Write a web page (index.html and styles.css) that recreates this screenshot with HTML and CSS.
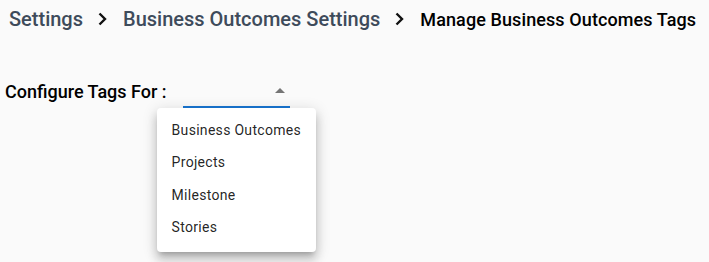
FILE: index.html
```html
<!DOCTYPE html>
<html lang="en">
<head>
    <meta charset="UTF-8">
    <meta name="viewport" content="width=device-width, initial-scale=1.0">
    <title>Manage Business Outcomes Tags</title>
    <link rel="stylesheet" href="styles.css">
</head>
<body>
    <div class="container">
        <!-- Breadcrumb -->
        <div class="breadcrumb">
            <span class="crumb">Settings</span>
            <span class="sep">
                <svg width="9" height="14" viewBox="0 0 9 14"><path d="M1.5 1.5 L7 7 L1.5 12.5" fill="none" stroke="#111" stroke-width="2.4"/></svg>
            </span>
            <span class="crumb">Business Outcomes Settings</span>
            <span class="sep">
                <svg width="9" height="14" viewBox="0 0 9 14"><path d="M1.5 1.5 L7 7 L1.5 12.5" fill="none" stroke="#111" stroke-width="2.4"/></svg>
            </span>
            <span class="crumb-current">Manage Business Outcomes Tags</span>
        </div>

        <!-- Selector de tipo -->
        <div class="config-row">
            <label class="config-label">Configure Tags For :</label>
            <div class="select">
                <span class="select-arrow"></span>
                <ul class="menu">
                    <li>Business Outcomes</li>
                    <li>Projects</li>
                    <li>Milestone</li>
                    <li>Stories</li>
                </ul>
            </div>
        </div>
    </div>
</body>
</html>
```

FILE: styles.css
```css
html, body {
    height: 100%;
}
body {
    margin: 0;
    background: #fafafa;
    font-family: Roboto, "Liberation Sans", sans-serif;
}
.container {
    min-height: 100%;
    box-sizing: border-box;
    padding: 6px 5px;
}
.breadcrumb {
    display: flex;
    align-items: center;
    height: 26px;
    padding-left: 4px;
}
.crumb {
    font-size: 20px;
    font-weight: 500;
    color: #3e4b5b;
}
.sep {
    display: flex;
    align-items: center;
    margin: 0 16px 0 15px;
}
.crumb-current {
    font-size: 18px;
    font-weight: 500;
    color: #000;
    letter-spacing: 0.1px;
}
.config-row {
    display: flex;
    align-items: flex-end;
    margin-top: 46px;
}
.config-label {
    font-size: 18px;
    font-weight: 500;
    color: #000;
    padding-bottom: 6px;
}
.select {
    position: relative;
    width: 107px;
    height: 28px;
    margin-left: 16px;
    border-bottom: 2px solid #1976d2;
}
.select-arrow {
    position: absolute;
    right: 5px;
    top: 10px;
    width: 0;
    height: 0;
    border-left: 5px solid transparent;
    border-right: 5px solid transparent;
    border-bottom: 5px solid #757575;
}
.menu {
    position: absolute;
    left: -26px;
    top: 30px;
    width: 159px;
    margin: 0;
    padding: 6px 0 8px;
    list-style: none;
    background: #fff;
    border-radius: 4px;
    box-shadow: 0 5px 5px -3px rgba(0,0,0,0.2), 0 8px 10px 1px rgba(0,0,0,0.14), 0 3px 14px 2px rgba(0,0,0,0.12);
}
.menu li {
    height: 32.4px;
    line-height: 32.4px;
    padding-left: 15px;
    font-size: 14px;
    color: rgba(0,0,0,0.87);
    letter-spacing: 0.3px;
}
```
